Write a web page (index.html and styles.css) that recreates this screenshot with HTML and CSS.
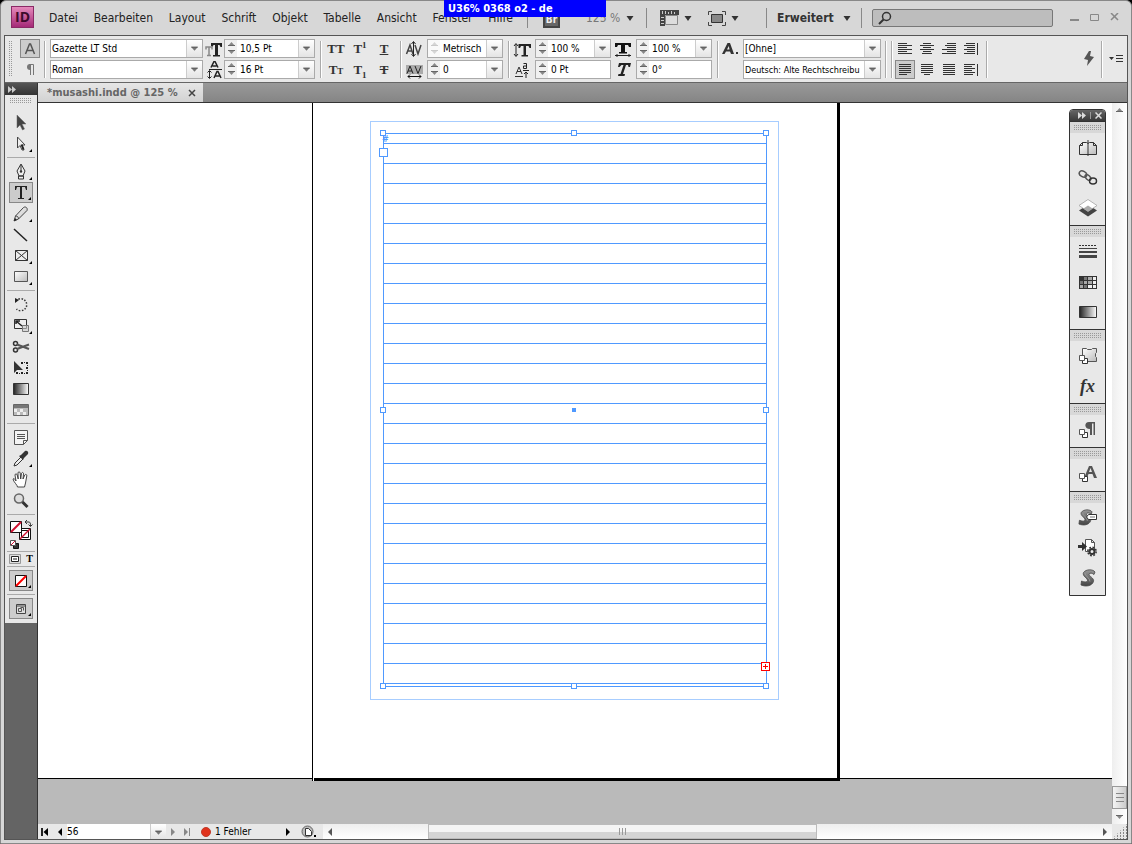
FILE: index.html
```html
<!DOCTYPE html>
<html lang="de">
<head>
<meta charset="utf-8">
<title>musashi.indd</title>
<link rel="stylesheet" href="styles.css">
</head>
<body>
<svg class="defs" aria-hidden="true">
  <defs>
    <linearGradient id="g-dark" x1="0" y1="0" x2="1" y2="0"><stop offset="0" stop-color="#222"/><stop offset="1" stop-color="#fff"/></linearGradient>
    <linearGradient id="g-light" x1="0" y1="0" x2="1" y2="1"><stop offset="0" stop-color="#fff"/><stop offset="1" stop-color="#bbb"/></linearGradient>
    <linearGradient id="g-grey" x1="0" y1="0" x2="0" y2="1"><stop offset="0" stop-color="#999"/><stop offset="1" stop-color="#444"/></linearGradient>
    <symbol id="drop" viewBox="0 0 16 17"><path d="M4.500 7h7l-3.500 4z" fill="#777"/><path d="M4.500 7h7" stroke="#555"/></symbol>
    <symbol id="up" viewBox="0 0 11 8"><path d="M2 6l3.500-4L9 6z" fill="#888"/><path d="M2 5.500h7" stroke="#666"/></symbol>
    <symbol id="down" viewBox="0 0 11 8"><path d="M2 2h7L5.500 6z" fill="#888"/><path d="M2 2.500h7" stroke="#666"/></symbol>
    <symbol id="caret" viewBox="0 0 8 8"><path d="M.5 2h7L4 7z" fill="#333"/></symbol>
    <symbol id="right" viewBox="0 0 6 8"><path d="M1 0l4 4-4 4z" fill="currentColor"/></symbol>
    <symbol id="left" viewBox="0 0 6 8"><path d="M5 0L1 4l4 4z" fill="currentColor"/></symbol>
    <symbol id="corner" viewBox="0 0 3 3"><path d="M3 0v3H0z"/></symbol>
    <symbol id="stack" viewBox="0 0 9 9"><path d="M3.500 3.500h5v5h-5z" fill="#fff" stroke="#333"/><path d="M.5.500h5v5h-5z" fill="#fff" stroke="#555"/></symbol>
    <symbol id="script" viewBox="0 0 16 18"><path d="M15 3C13 0 6 0 3.500 3.500 2 7 7.500 9 7.500 11.500 7.500 13.500 4 13 1.500 12L1 16c5 2 11 1 12.500-3.500C14.500 9 8.500 7 9 5.200c1-1.700 3-1.200 5 .3z" fill="url(#g-grey)" stroke="#444" stroke-width=".8"/><path d="M5 4c0 3 5 5 5 8.500" fill="none" stroke="#999"/></symbol>
  </defs>
</svg>

<div class="window">
  <header class="menubar">
    <div class="logo">ID</div>
    <nav class="menus">
      <a href="#">Datei</a><a href="#">Bearbeiten</a><a href="#">Layout</a><a href="#">Schrift</a><a href="#">Objekt</a><a href="#">Tabelle</a><a href="#">Ansicht</a><a href="#">Fenster</a><a href="#">Hilfe</a>
    </nav>
    <span class="rule"></span>
    <button class="bridge" type="button">Br</button>
    <button class="zoom-level" type="button">125 %<svg width="8" height="8"><use href="#caret"/></svg></button>
    <span class="rule"></span>
    <div class="view-tools">
      <button type="button" aria-label="Anzeigeoptionen"><svg width="19" height="16" viewBox="0 0 19 16"><path d="M0 0h19v5H5v11H0z" fill="#444"/><path d="M2.500 1v3M5.500 1v3M8.500 2v2M11.500 1v3M14.500 2v2M1 7.500h3M1 10.500h3M1 13.500h3" stroke="#ccc"/><path d="M5.500 5.500h12v9h-12z" fill="#ddd" stroke="#888"/></svg><svg width="8" height="8"><use href="#caret"/></svg></button>
      <button type="button" aria-label="Bildschirmmodus"><svg width="18" height="15" viewBox="0 0 18 15"><path d="M.5 4V.5H4M14 .5h3.500V4M17.500 11v3.500H14M4 14.500H.5V11" fill="none" stroke="#444"/><path d="M3.500 3.500h11v8h-11z" fill="#888" stroke="#333"/></svg><svg width="8" height="8"><use href="#caret"/></svg></button>
    </div>
    <span class="rule"></span>
    <button class="workspace" type="button">Erweitert<svg width="8" height="8"><use href="#caret"/></svg></button>
    <span class="rule"></span>
    <label class="search"><svg width="14" height="14" viewBox="0 0 14 14"><circle cx="8.500" cy="5.500" r="4" fill="none" stroke="#333" stroke-width="1.500"/><path d="M5.500 8.500L1 13" stroke="#333" stroke-width="2"/></svg><input type="text" aria-label="Suche"></label>
    <div class="win-buttons">
      <button type="button" aria-label="Minimieren"><svg width="10" height="10"><path d="M0 7h9" stroke="#888" stroke-width="2"/></svg></button>
      <button type="button" aria-label="Maximieren"><svg width="10" height="10"><path d="M.5 1.500h8v6h-8z" fill="none" stroke="#888"/></svg></button>
      <button type="button" aria-label="Schließen"><svg width="10" height="10"><path d="M1 0l7 7M8 0L1 7" stroke="#888" stroke-width="1.500"/></svg></button>
    </div>
    <div class="notice">U36% 0368 o2 - de</div>
  </header>

  <main class="workarea">
    <section class="controls">
      <span class="grip-v"></span>
      <div class="modes">
        <button class="on" type="button" aria-label="Zeichen"><svg width="12" height="12" viewBox="0 0 12 12"><path d="M1.500 11L5.500 1h1l4 10M3 7.500h6" fill="none" stroke="#555" stroke-width="1.500"/></svg></button>
        <button type="button" aria-label="Absatz"><svg width="10" height="11" viewBox="0 0 10 11"><path d="M4 .5h4.500V11M5.500 0v11" fill="none" stroke="#777"/><path d="M5 0a3 3 0 000 6z" fill="#777"/></svg></button>
      </div>
      <span class="sep"></span>
      <div class="col family">
        <label class="field"><select aria-label="Schrift"><option>Gazette LT Std</option></select><span class="drop"><svg><use href="#drop"/></svg></span></label>
        <label class="field"><select aria-label="Schnitt"><option>Roman</option></select><span class="drop"><svg><use href="#drop"/></svg></span></label>
      </div>
      <div class="glyphs narrow">
        <svg width="18" height="18" viewBox="0 0 18 18"><path d="M6 6V3h11v4h-1.500L14.500 5H13v10h2v1.500H8V15h2V5H8.500L7.500 7z" fill="#222"/><path d="M1 9.500V7h6v2.500M4 7v8M2 15.500h4" fill="none" stroke="#888" stroke-width="1.500"/></svg>
        <svg width="18" height="18" viewBox="0 0 18 18"><path d="M6 6.500l3-6h1l3 6M7.500 5h4M9 17l3-6.500h1l3 6.500M10.500 15h4" fill="none" stroke="#222" stroke-width="1.500"/><path d="M4 8.500h13M4.500 10v7M2.500 11.500l2-2 2 2M2.500 15.500l2 2 2-2" fill="none" stroke="#222"/></svg>
      </div>
      <div class="col size">
        <div class="field"><span class="spin"><button type="button" aria-label="Mehr"><svg><use href="#up"/></svg></button><button type="button" aria-label="Weniger"><svg><use href="#down"/></svg></button></span><input aria-label="Schriftgrad" value="10,5 Pt"><button class="drop" type="button" aria-label="Liste"><svg><use href="#drop"/></svg></button></div>
        <div class="field"><span class="spin"><button type="button" aria-label="Mehr"><svg><use href="#up"/></svg></button><button type="button" aria-label="Weniger"><svg><use href="#down"/></svg></button></span><input aria-label="Zeilenabstand" value="16 Pt"><button class="drop" type="button" aria-label="Liste"><svg><use href="#drop"/></svg></button></div>
      </div>
      <span class="sep"></span>
      <div class="caps">
        <button type="button">TT</button><button type="button">T<sup>1</sup></button><button type="button"><u>T</u></button>
        <button type="button">T<small>T</small></button><button type="button">T<sub>1</sub></button><button type="button"><s>T</s></button>
      </div>
      <span class="sep"></span>
      <div class="glyphs">
        <svg width="18" height="18" viewBox="0 0 18 18"><path d="M1.500 14L5 5l3 9M3 11h4M10 5l3 9 3-9" fill="none" stroke="#444" stroke-width="1.500"/><path d="M8.500 2v14M6.500 4l2-2.500 2 2.500M6.500 14l2 2.500 2-2.500" fill="none" stroke="#222"/></svg>
        <svg width="18" height="18" viewBox="0 0 18 18"><path d="M1 4h17v9H1z" fill="#aaa"/><path d="M2 12.500L5 5l3 7.500M3 10h4M10 5l3 7.500L16 5" fill="none" stroke="#222"/><path d="M3 15.500h13M5 13.500l-2 2 2 2M14 13.500l2 2-2 2" fill="none" stroke="#111"/></svg>
      </div>
      <div class="col kern">
        <div class="field"><span class="spin faint"><button type="button" aria-label="Mehr"><svg><use href="#up"/></svg></button><button type="button" aria-label="Weniger"><svg><use href="#down"/></svg></button></span><input aria-label="Kerning" value="Metrisch"><button class="drop" type="button" aria-label="Liste"><svg><use href="#drop"/></svg></button></div>
        <div class="field"><span class="spin"><button type="button" aria-label="Mehr"><svg><use href="#up"/></svg></button><button type="button" aria-label="Weniger"><svg><use href="#down"/></svg></button></span><input aria-label="Laufweite" value="0"><button class="drop" type="button" aria-label="Liste"><svg><use href="#drop"/></svg></button></div>
      </div>
      <span class="sep"></span>
      <div class="glyphs">
        <svg width="18" height="18" viewBox="0 0 18 18"><path d="M5.500 8V4H18v4h-1.500L15.500 6H13v9h2v1.500H8.500V15h2V6H8L7 8z" fill="#222"/><path d="M3 4v12M1 6l2-2.500L5 6M1 14l2 2.500L5 14" fill="none" stroke="#222"/></svg>
        <svg width="18" height="18" viewBox="0 0 18 18"><path d="M3 13l3-7 3 7M4 10.500h4M2 15.500h8" fill="none" stroke="#333"/><path d="M10.500 2.500h3v5h-3v-2.500h3M10 9.500h6M13 11v6M11 13l2-2 2 2" fill="none" stroke="#222"/></svg>
      </div>
      <div class="col scale">
        <div class="field"><span class="spin"><button type="button" aria-label="Mehr"><svg><use href="#up"/></svg></button><button type="button" aria-label="Weniger"><svg><use href="#down"/></svg></button></span><input aria-label="Vertikal skalieren" value="100 %"><button class="drop" type="button" aria-label="Liste"><svg><use href="#drop"/></svg></button></div>
        <div class="field"><span class="spin"><button type="button" aria-label="Mehr"><svg><use href="#up"/></svg></button><button type="button" aria-label="Weniger"><svg><use href="#down"/></svg></button></span><input aria-label="Grundlinienversatz" value="0 Pt"></div>
      </div>
      <div class="glyphs">
        <svg width="18" height="18" viewBox="0 0 18 18"><path d="M1 7V3h16v4h-2l-1-2h-3v7h2v1.500H5V12h2V5H4L3 7z" fill="#111"/><path d="M1 15.500h16M3 14v3M15 14v3" stroke="#222"/></svg>
        <svg width="18" height="18" viewBox="0 0 18 18"><path d="M4 6l1-4h12l-1 4h-1.500l-.5-2h-2l-3 9h2l-.5 2H4l.5-2h2l3-9H7.500L5.500 6z" fill="#222"/></svg>
      </div>
      <div class="col scale">
        <div class="field"><span class="spin"><button type="button" aria-label="Mehr"><svg><use href="#up"/></svg></button><button type="button" aria-label="Weniger"><svg><use href="#down"/></svg></button></span><input aria-label="Horizontal skalieren" value="100 %"><button class="drop" type="button" aria-label="Liste"><svg><use href="#drop"/></svg></button></div>
        <div class="field"><span class="spin"><button type="button" aria-label="Mehr"><svg><use href="#up"/></svg></button><button type="button" aria-label="Weniger"><svg><use href="#down"/></svg></button></span><input aria-label="Neigen" value="0°"></div>
      </div>
      <span class="sep after-scale"></span>
      <div class="glyphs">
        <svg width="20" height="18" viewBox="0 0 20 18"><path d="M1 14L6.500 3H9l4 11h-3l-1-2.500H5L3.500 14zM6 9.500h2.500L7.800 6z" fill="#333"/><path d="M15 12h2v2h-2z" fill="#333"/></svg>
      </div>
      <div class="col style">
        <label class="field"><select aria-label="Zeichenformat"><option>[Ohne]</option></select><span class="drop"><svg><use href="#drop"/></svg></span></label>
        <label class="field"><select class="language" aria-label="Sprache"><option>Deutsch: Alte Rechtschreibu</option></select><span class="drop"><svg><use href="#drop"/></svg></span></label>
      </div>
      <span class="sep"></span>
      <span class="sep"></span>
      <div class="aligns">
        <button type="button" aria-label="Linksbündig"><svg width="16" height="12"><path d="M1 .5h9M1 2.500h14M1 4.500h9M1 6.500h14M1 8.500h9M1 10.500h14"/></svg></button>
        <button type="button" aria-label="Zentriert"><svg width="16" height="12"><path d="M4 .5h8M1 2.500h14M4 4.500h8M1 6.500h14M4 8.500h8M3 10.500h10"/></svg></button>
        <button type="button" aria-label="Rechtsbündig"><svg width="16" height="12"><path d="M6 .5h9M4 2.500h11M6 4.500h9M1 6.500h14M6 8.500h9M1 10.500h14"/></svg></button>
        <button type="button" aria-label="Am Rücken"><svg width="16" height="12"><path d="M3 .5h9M1 2.500h11M4 4.500h8M1 6.500h11M4 8.500h8M1 10.500h11M14.500 0v12"/></svg></button>
        <button class="on" type="button" aria-label="Blocksatz links"><svg width="16" height="12"><path d="M2 .5h12M2 2.500h12M2 4.500h12M2 6.500h12M2 8.500h12M2 10.500h8"/></svg></button>
        <button type="button" aria-label="Blocksatz Mitte"><svg width="16" height="12"><path d="M2 .5h12M2 2.500h12M2 4.500h12M2 6.500h12M2 8.500h12M5 10.500h6"/></svg></button>
        <button type="button" aria-label="Blocksatz"><svg width="16" height="12"><path d="M2 .5h12M2 2.500h12M2 4.500h12M2 6.500h12M2 8.500h12M2 10.500h12"/></svg></button>
        <button type="button" aria-label="Weg vom Rücken"><svg width="16" height="12"><path d="M1 .5h11M1 2.500h8M1 4.500h11M1 6.500h8M1 8.500h11M1 10.500h9M14.500 0v12"/></svg></button>
      </div>
      <span class="sep"></span>
      <div class="extras">
        <button type="button" aria-label="Schnell anwenden"><svg width="12" height="16" viewBox="0 0 12 16"><path d="M6 0L1 8l4 1-1 6 7-9-4-1 1-5z" fill="#555"/></svg></button>
        <span class="sep"></span>
        <button type="button" aria-label="Menü"><svg width="14" height="8" viewBox="0 0 14 8"><path d="M0 2h5L2.500 5zM7 0h7v1H7zM7 3h7v1H7zM7 6h7v1H7z" fill="#333"/></svg></button>
      </div>
    </section>

    <div class="lower">
      <aside class="toolbox">
        <button class="dock-head" type="button" aria-label="Erweitern"><svg width="8" height="7" viewBox="0 0 8 7"><path d="M0 0l4 3.500L0 7zM4 0l4 3.500L4 7z" fill="#ccc"/></svg></button>
        <div class="tools">
          <span class="grip-h"></span>
          <div class="set">
            <button type="button" aria-label="Auswahl"><svg width="20" height="20" viewBox="0 0 20 20"><path d="M6 2v13l3-3 2.500 5 2-1-2.500-5h4z" fill="#444" stroke="#666" stroke-width=".5"/></svg></button>
            <button type="button" aria-label="Direktauswahl"><svg width="20" height="20" viewBox="0 0 20 20"><path d="M6.500 3v11l2.500-2.500L11 16h2l-2-5h3z" fill="#eee" stroke="#444"/><path d="M10.500 10.500l2 5" stroke="#222" stroke-width="2"/></svg><svg class="more"><use href="#corner"/></svg></button>
          </div>
          <div class="set">
            <button type="button" aria-label="Zeichenstift"><svg width="20" height="20" viewBox="0 0 20 20"><path d="M10 2l4 7-2 5H8L6 9zM10 3v6M7.500 14h5v3h-5z" fill="#eee" stroke="#333"/><circle cx="10" cy="9.500" r="1.200" fill="#333"/></svg><svg class="more"><use href="#corner"/></svg></button>
            <button class="on" type="button" aria-label="Text"><svg width="20" height="20" viewBox="0 0 20 20"><path d="M4 7V3h12v4h-1l-1-3h-3v11h2v1H7v-1h2V4H6L5 7z" fill="#222"/></svg><svg class="more"><use href="#corner"/></svg></button>
            <button type="button" aria-label="Buntstift"><svg width="20" height="20" viewBox="0 0 20 20"><path d="M3 17l1.500-5 8-8.500c2-1.500 4.500.5 3.500 3l-8.500 8.500zM4.500 12c2 0 3 1 3 3" fill="url(#g-light)" stroke="#444"/><path d="M3 17l1-3 2 2z" fill="#222"/></svg><svg class="more"><use href="#corner"/></svg></button>
            <button type="button" aria-label="Linie"><svg width="20" height="20" viewBox="0 0 20 20"><path d="M3 4l13 12" stroke="#222" stroke-width="1.500"/></svg></button>
            <button type="button" aria-label="Rechteckrahmen"><svg width="20" height="20" viewBox="0 0 20 20"><path d="M4.500 4.500h12v10h-12zM4.500 4.500l12 10M16.500 4.500l-12 10" fill="#eee" stroke="#333"/></svg><svg class="more"><use href="#corner"/></svg></button>
            <button type="button" aria-label="Rechteck"><svg width="20" height="20" viewBox="0 0 20 20"><path d="M3.500 4.500h13v10h-13z" fill="url(#g-light)" stroke="#555"/></svg><svg class="more"><use href="#corner"/></svg></button>
          </div>
          <div class="set">
            <button type="button" aria-label="Drehen"><svg width="20" height="20" viewBox="0 0 20 20"><path d="M5 6a6 6 0 11.500 8" fill="none" stroke="#333" stroke-width="1.500" stroke-dasharray="1.500 1.500"/><path d="M4 8V3l4 2z" fill="#222"/></svg></button>
            <button type="button" aria-label="Skalieren"><svg width="20" height="20" viewBox="0 0 20 20"><path d="M3.500 3.500h12v9h-12z" fill="#eee" stroke="#333"/><path d="M11.500 9.500h6v6h-6z" fill="#ccc" fill-opacity=".6" stroke="#777"/><path d="M5 8V5h4M5 5l6 5" fill="none" stroke="#222" stroke-width="1.500"/></svg><svg class="more"><use href="#corner"/></svg></button>
            <button type="button" aria-label="Schere"><svg width="20" height="20" viewBox="0 0 20 20"><circle cx="4.500" cy="6.500" r="2" fill="none" stroke="#333" stroke-width="1.500"/><circle cx="4.500" cy="13" r="2" fill="none" stroke="#333" stroke-width="1.500"/><path d="M6 7.500l12 4.500M6 12l12-4.500" stroke="#555" stroke-width="2"/></svg></button>
            <button type="button" aria-label="Frei transformieren"><svg width="20" height="20" viewBox="0 0 20 20"><path d="M10 4h2v2h-2zM13 4h1v1h-1zM15 4h2v2h-2zM16 7h1v1h-1zM15 9h2v2h-2zM16 12h1v1h-1zM15 14h2v2h-2zM13 15h1v1h-1zM10 14h2v2h-2zM8 15h1v1H8zM5 14h2v2H5z" fill="#222"/><path d="M3 3v12l3-3h6z" fill="#333"/></svg></button>
            <button type="button" aria-label="Verlauf"><svg width="20" height="20" viewBox="0 0 20 20"><path d="M2.500 4.500h15v11h-15z" fill="url(#g-dark)" stroke="#333"/></svg></button>
            <button type="button" aria-label="Weiche Verlaufskante"><svg width="20" height="20" viewBox="0 0 20 20"><path d="M2.500 4.500h15v11h-15z" fill="#bbb" stroke="#666"/><path d="M3 9h3v3H3zM9 9h3v3H9zM6 12h3v3H6zM12 12h3v3h-3z" fill="#eee"/><path d="M3 5h14v3H3z" fill="#777"/></svg></button>
          </div>
          <div class="set">
            <button type="button" aria-label="Notiz"><svg width="20" height="20" viewBox="0 0 20 20"><path d="M3.500 2.500h13v10l-4 4h-9z" fill="#f4f4f4" stroke="#555"/><path d="M6 6.500h8M6 8.500h8M6 10.500h8M12.500 16.500v-4h4" fill="none" stroke="#555"/></svg></button>
            <button type="button" aria-label="Pipette"><svg width="20" height="20" viewBox="0 0 20 20"><path d="M3 17l1-3 6-6 2 2-6 6z" fill="#eee" stroke="#333"/><path d="M8 7l2-1 4-4c2-1 4 1 3 3l-4 4-1 2z" fill="#333"/></svg><svg class="more"><use href="#corner"/></svg></button>
            <button type="button" aria-label="Hand"><svg width="20" height="20" viewBox="0 0 20 20"><path d="M6.500 17c0-2-4-5-4.500-8 1-1 2 0 3 2L4 5c0-1.500 2-1.500 2.200 0l1 4L7 3c0-1.500 2-1.500 2.200 0l.5 6 .8-5.500c.3-1.500 2.200-1.200 2 .2L12 9l1.800-4c.8-1.200 2.300-.5 2 .8L14.500 13l-1 4z" fill="#fff" stroke="#333" stroke-width=".9"/></svg></button>
            <button type="button" aria-label="Zoom"><svg width="20" height="20" viewBox="0 0 20 20"><circle cx="8" cy="7.500" r="4.500" fill="#ddd" stroke="#666" stroke-width="1.500"/><path d="M11.500 11l5 5" stroke="#333" stroke-width="3"/></svg></button>
          </div>
          <div class="colours">
            <svg width="26" height="32" viewBox="0 0 26 32"><path d="M11.500 10.500h11v11h-11z" fill="#fff" stroke="#111"/><path d="M13.500 12.500h7v7h-7z" fill="#fff" stroke="#111"/><path d="M12 21L22 11" stroke="#d01030" stroke-width="1.500"/><path d="M2.500 3.500h11v11h-11z" fill="#fff" stroke="#111"/><path d="M3 14L13 4" stroke="#d01030" stroke-width="2"/><path d="M17 4h4c1 0 1.500 1 1.500 4M19 2l-2 2 2 2M20.500 6.500l2 2 2-2" fill="none" stroke="#333"/><path d="M5.500 25.500h5v5h-5z" fill="#333" stroke="#111"/><path d="M2.500 22.500h5v5h-5z" fill="#fff" stroke="#555"/><path d="M3 27l4-4" stroke="#d01030"/></svg>
          </div>
          <div class="apply">
            <svg width="12" height="10"><path d="M.5.5h11v9H.5z" fill="#ddd" stroke="#999"/><path d="M2.500 2.500h7v5h-7z" fill="#fff" stroke="#222"/><path d="M4 4h4v2H4z" fill="#888"/></svg>
            <b>T</b>
          </div>
          <div class="wide"><button class="on" type="button" aria-label="Keine"><svg width="14" height="14" viewBox="0 0 14 14"><path d="M1.500 1.500h11v11h-11z" fill="#fff" stroke="#111"/><path d="M2 12L12 2" stroke="#f00" stroke-width="2"/></svg><svg class="more"><use href="#corner"/></svg></button></div>
          <div class="wide"><button class="on" type="button" aria-label="Ansichtsmodus"><svg width="14" height="14" viewBox="0 0 14 14"><path d="M2.500 2.500h9v9h-9z" fill="#ddd" stroke="#444"/><path d="M2 4h10" stroke="#444"/><path d="M4.500 6.500h3v3h-3zM6.500 5.500h3v3" fill="none" stroke="#555"/></svg><svg class="more"><use href="#corner"/></svg></button></div>
        </div>
      </aside>

      <section class="document">
        <div class="tabs"><div class="tab"><span>*musashi.indd @ 125 %</span><button type="button" aria-label="Tab schließen"><svg width="8" height="8"><path d="M1 1l6 6M7 1L1 7" stroke="#444" stroke-width="1.500"/></svg></button></div></div>
        <div class="view">
          <div class="canvas">
            <div class="pasteboard">
              <div class="page">
                <div class="margin"></div>
                <div class="frame">
                  <span class="hash">#</span>
                  <i class="knob tl"></i><i class="knob tc"></i><i class="knob tr"></i>
                  <i class="knob ml"></i><i class="knob mid"></i><i class="knob mr"></i>
                  <i class="knob bl"></i><i class="knob bc"></i><i class="knob br"></i>
                  <i class="port in"></i><i class="port out"></i>
                </div>
              </div>
            </div>
          </div>
          <div class="vscroll">
            <button type="button" aria-label="Nach oben"><svg width="11" height="8"><use href="#up"/></svg></button>
            <span class="vthumb"></span>
            <button type="button" aria-label="Nach unten"><svg width="11" height="8"><use href="#down"/></svg></button>
          </div>
        </div>
        <footer class="status">
          <button type="button" aria-label="Erste Seite"><svg width="8" height="8"><path d="M1 0v8" stroke="#222" stroke-width="2"/><path d="M7 0v8L2.500 4z"/></svg></button>
          <button type="button" aria-label="Vorherige Seite"><svg width="6" height="8"><use href="#left"/></svg></button>
          <input class="page-no" aria-label="Seite" value="56">
          <button class="drop" type="button" aria-label="Seitenliste"><svg><use href="#drop"/></svg></button>
          <button class="dim" type="button" aria-label="Nächste Seite"><svg width="6" height="8"><use href="#right"/></svg></button>
          <button class="dim" type="button" aria-label="Letzte Seite"><svg width="8" height="8"><path d="M1 0v8l4-4zM6 0h1v8H6z" fill="currentColor"/></svg></button>
          <span class="errors"><i></i>1 Fehler</span>
          <button type="button" aria-label="Preflight-Menü"><svg width="6" height="8"><use href="#right"/></svg></button>
          <button class="preflight" type="button" aria-label="Status"><svg width="16" height="14" viewBox="0 0 16 14"><circle cx="6.500" cy="6.500" r="5.500" fill="#bbb" stroke="#666"/><path d="M4.500 3.500h3l3 3v4h-6z" fill="#fff" stroke="#333"/><path d="M13 10h2v2h-2z"/></svg></button>
          <div class="hscroll">
            <button type="button" aria-label="Nach links"><svg width="6" height="8"><use href="#left"/></svg></button>
            <span class="hthumb"></span>
            <button type="button" aria-label="Nach rechts"><svg width="6" height="8"><use href="#right"/></svg></button>
          </div>
          <span class="resize"></span>
        </footer>

        <aside class="panels">
          <div class="panels-head"><svg width="8" height="7" viewBox="0 0 8 7"><path d="M0 0l4 3.500L0 7zM4 0l4 3.500L4 7z" fill="#ddd"/></svg><span></span><svg width="7" height="7"><path d="M.5.5l6 6M6.500.5l-6 6" stroke="#ddd" stroke-width="1.500"/></svg></div>
          <div class="group">
            <button type="button" aria-label="Seiten"><svg width="20" height="20" viewBox="0 0 20 20"><path d="M1.500 16.500v-9l3-3h4l1.500 1 1.500-1h4l3 3v9zM1.500 7.500h3v-3M18.500 7.500h-3v-3" fill="url(#g-light)" stroke="#333"/><path d="M10 2v16" stroke="#333"/></svg></button>
            <button type="button" aria-label="Verknüpfungen"><svg width="20" height="20" viewBox="0 0 20 20"><g fill="none" stroke="#555" stroke-width="1.500"><ellipse cx="5" cy="6" rx="4" ry="2.800" transform="rotate(30 5 6)"/><ellipse cx="10" cy="9.500" rx="3.500" ry="2" transform="rotate(45 10 9.500)"/><ellipse cx="15" cy="13" rx="3.500" ry="3" stroke="#333"/></g></svg></button>
            <button type="button" aria-label="Ebenen"><svg width="20" height="20" viewBox="0 0 20 20"><path d="M1 12.500l9-6 9 6-9 6z" fill="#444"/><path d="M1 7.500l9-6 9 6-9 6z" fill="#fff" stroke="#999" stroke-width=".7"/><path d="M5.500 10.500l4.500-3 4.500 3-4.500 3z" fill="#aaa"/></svg></button>
          </div>
          <div class="group">
            <button type="button" aria-label="Kontur"><svg width="20" height="20" viewBox="0 0 20 20"><path d="M1 3.500h18" stroke="#333" stroke-dasharray="2 1"/><path d="M1 6.500h18" stroke="#444"/><path d="M1 10h18" stroke="#444" stroke-width="2"/><path d="M1 14.500h18" stroke="#444" stroke-width="3"/></svg></button>
            <button type="button" aria-label="Farbfelder"><svg width="20" height="20" viewBox="0 0 20 20"><path d="M1 4h18v13H1z" fill="#333"/><path d="M6 5h3v3H6zM2 9h3v3H2zM6 13h3v3H6z" fill="#777"/><path d="M10 5h4v3h-4zM6 9h3v3H6zM2 13h3v3H2zM10 9h4v3h-4z" fill="#aaa"/><path d="M15 5h3v3h-3zM15 9h3v3h-3zM10 13h4v3h-4zM15 13h3v3h-3z" fill="#eee"/></svg></button>
            <button type="button" aria-label="Verlauf"><svg width="20" height="20" viewBox="0 0 20 20"><path d="M1.500 4.500h17v11h-17z" fill="url(#g-dark)" stroke="#333"/></svg></button>
          </div>
          <div class="group">
            <button type="button" aria-label="Objektformate"><svg width="20" height="20" viewBox="0 0 20 20"><path d="M4.500 2.500h4l1 1h4l1-1h4v4l-1 1v3l1 1v4h-14z" fill="url(#g-light)" stroke="#555"/><use href="#stack" x="1" y="9" width="9" height="9"/></svg></button>
            <button type="button" aria-label="Effekte"><span class="fx">fx</span></button>
          </div>
          <div class="group">
            <button type="button" aria-label="Absatzformate"><svg width="20" height="20" viewBox="0 0 20 20"><path d="M11 2h6v13h-1.500V3.500H14V15h-2V9c-6 0-6-7-1-7z" fill="#555"/><use href="#stack" x="1" y="9" width="9" height="9"/></svg></button>
          </div>
          <div class="group">
            <button type="button" aria-label="Zeichenformate"><svg width="20" height="20" viewBox="0 0 20 20"><path d="M6 14l5-12h3l5 12h-3l-1.500-4h-4L9 14zM11 8h3l-1.500-4z" fill="#555"/><use href="#stack" x="1" y="9" width="9" height="9"/></svg></button>
          </div>
          <div class="group">
            <button type="button" aria-label="Skriptetikett"><svg width="20" height="20" viewBox="0 0 20 20"><use href="#script" x="0" y="1" width="15" height="17"/><path d="M8.500 9l2-2.500h8v5h-8z" fill="#fff" stroke="#333"/><path d="M12 9h5" stroke="#777"/></svg></button>
            <button type="button" aria-label="Hintergrundaufgaben"><svg width="20" height="20" viewBox="0 0 20 20"><path d="M7.500 1.500h6l3 3v9h-9zM13.500 1.500v3h3" fill="#fff" stroke="#555"/><path d="M0 7h4V4l5 4.500L4 13v-3H0z" fill="#333"/><circle cx="14" cy="13.500" r="2.500" fill="#eee" stroke="#333" stroke-width="2"/><circle cx="14" cy="13.500" r="4.200" fill="none" stroke="#333" stroke-width="1.500" stroke-dasharray="1.800 1.500"/></svg></button>
            <button type="button" aria-label="Skripte"><svg width="20" height="20" viewBox="0 0 20 20"><use href="#script" x="2" y="1" width="16" height="18"/></svg></button>
          </div>
        </aside>
      </section>
    </div>
  </main>
</div>
</body>
</html>
```
FILE: styles.css
```css
*, *::before { box-sizing: border-box; }
body { margin: 0; background: #000; font: 10px/14px "DejaVu Sans Condensed", "DejaVu Sans", sans-serif; color: #000; }
button, input, select { font: inherit; color: inherit; border: 0; padding: 0; margin: 0; background: none; border-radius: 0; appearance: none; }
button { display: flex; align-items: center; justify-content: center; flex: none; }
svg { display: block; flex: none; }
a { color: inherit; text-decoration: none; }
.defs { position: absolute; width: 0; height: 0; }

.window { min-height: 100vh; display: flex; flex-direction: column; padding: 0 3px 3px; background: #d7d7d7; border: 1px solid #888; border-radius: 6px 6px 0 0; }

/* menu bar */
.menubar { position: relative; height: 34px; flex: none; display: flex; align-items: center; padding-left: 7px; font-size: 12px; line-height: 16px; color: #222; }
.logo { width: 23px; height: 22px; margin: 0 15px 2px 0; flex: none; background: linear-gradient(#e58abb, #a52a78); border: 1px solid #8a2a66; color: #3d0b2b; font: bold 14px/20px "Open Sans", sans-serif; text-align: center; }
.menus { width: 464px; flex: none; display: flex; justify-content: space-between; margin-right: 14px; }
.rule { width: 1px; height: 20px; flex: none; background: #888; }
.bridge { width: 17px; height: 15px; margin: 4px 26px 0 15px; border: 2px solid #444; background: #666; color: #eee; font-weight: bold; font-size: 10px; }
.zoom-level { width: 48px; justify-content: space-between; margin-right: 12px; color: #777; font-size: 12px; }
.view-tools { width: 93px; display: flex; gap: 16px; padding-left: 13px; margin-right: 26px; }
.view-tools button { gap: 5px; }
.workspace { width: 74px; justify-content: space-between; margin: 0 10px; font-weight: bold; color: #333; }
.search { height: 18px; margin: 0 16px 0 10px; flex: 0 1 181px; display: flex; align-items: center; padding-left: 5px; background: #bdbdbd; border: 1px solid #777; border-radius: 2px; }
.search input { flex: 1; min-width: 0; }
.win-buttons { display: flex; gap: 10px; margin-left: auto; padding-right: 8px; }
.notice { position: absolute; left: 440px; top: -1px; width: 162px; height: 17px; padding-left: 4px; background: #00f; color: #fff; font-weight: bold; font-size: 11px; line-height: 17px; white-space: nowrap; }

/* control strip */
.workarea { flex: 1; display: flex; flex-direction: column; border: 1px solid #555; background: #646464; }
.controls { flex: none; display: flex; align-items: center; height: 47px; padding-left: 4px; background: #e8e8e8; border-bottom: 1px solid #666; }
.controls > * { flex: none; }
.grip-v { width: 4px; height: 36px; margin-right: 7px; background: conic-gradient(transparent 75%, #999 0) 0 0 / 2px 2px; }
.sep { width: 2px; height: 37px; background: linear-gradient(90deg, #aaa 50%, #fff 50%); }
.modes { display: grid; gap: 2px; margin-right: 4px; }
.modes button { width: 20px; height: 19px; }
.on { background: #ccc; border: 1px solid #888; }
.col { display: grid; grid-template-columns: minmax(0, 1fr); gap: 2px; }
.field { display: flex; height: 19px; background: #fff; border: 1px solid #aaa; }
.field input, .field select { flex: 1; min-width: 0; padding-left: 3px; white-space: nowrap; }
.field select { padding-left: 1px; }
.family { width: 153px; margin-left: 4px; }
.size { width: 91px; margin-right: 5px; }
.kern { width: 76px; margin: 0 5px 0 1px; }
.scale { width: 76px; margin-left: 1px; }
.after-scale { margin-left: 5px; }
.style { width: 138px; margin-right: 4px; }
.field .language { font-size: 9px; }
.drop { display: block; width: 16px; height: 17px; flex: none; background: linear-gradient(#fff, #e4e4e4); border-left: 1px solid #ccc; }
.drop svg { width: 15px; height: 17px; }
.spin { width: 12px; flex: none; background: #f0f0f0; }
.spin button { width: 12px; height: 8px; }
.spin svg { width: 11px; height: 8px; }
.faint { opacity: .35; }
.glyphs { width: 24px; height: 40px; display: grid; grid-template-rows: 19px 19px; gap: 2px; justify-items: center; align-items: center; }
.narrow { width: 21px; }
.caps { width: 76px; display: grid; grid-template-columns: repeat(3, 24px); grid-auto-rows: 19px; gap: 2px 0; margin-left: 2px; font: bold 13px/18px "Liberation Serif", serif; color: #333; }
.caps button { display: block; text-align: center; }
.caps sup, .caps sub, .caps small { font-size: 9px; line-height: 0; }
.aligns { display: grid; grid-template-columns: repeat(4, 20px); grid-auto-rows: 19px; gap: 2px; margin: 0 5px 0 2px; }
.sep + .sep { margin-left: 4px; }
.aligns svg { stroke: #333; fill: none; }
.extras { margin-left: auto; display: flex; align-items: center; gap: 6px; padding-right: 4px; }

/* toolbox */
.lower { flex: 1; display: flex; }
.toolbox { width: 33px; flex: none; background: #646464; border-right: 1px solid #333; }
.dock-head { width: 32px; height: 12px; justify-content: flex-start; padding-left: 3px; background: linear-gradient(#555, #333); }
.tools { display: flex; flex-direction: column; padding: 3px 2px 4px; background: #e8e8e8; }
.grip-h { height: 5px; margin: 0 3px 9px; background: conic-gradient(transparent 75%, #999 0) 0 0 / 2px 2px; }
.set { padding-bottom: 3px; margin-bottom: 3px; border-bottom: 1px solid #aaa; }
.set button, .wide button { position: relative; width: 24px; height: 21px; margin: 0 auto; }
.more { position: absolute; right: 1px; bottom: 2px; width: 3px; height: 3px; }
.colours { height: 34px; border-bottom: 1px solid #aaa; padding-left: 1px; }
.apply { height: 15px; display: flex; align-items: center; justify-content: center; gap: 5px; border-bottom: 1px solid #aaa; font-family: "Liberation Serif", serif; }
.wide { padding-top: 3px; }
.wide + .wide { border-top: 1px solid #aaa; margin-top: 3px; }

/* document window */
.document { position: relative; flex: 1; min-width: 0; display: flex; flex-direction: column; }
.tabs { height: 20px; flex: none; display: flex; background: linear-gradient(#999, #858585); border-bottom: 1px solid #333; }
.tab { width: 165px; display: flex; align-items: center; justify-content: space-between; padding: 0 7px 0 9px; background: linear-gradient(#e6e6e6, #d2d2d2); font-size: 11px; font-weight: bold; color: #666; white-space: nowrap; }
.view { flex: 1; display: flex; }
.canvas { position: relative; flex: 1; min-width: 0; overflow: hidden; background: #bababa; }
.pasteboard { height: 676px; background: #fff; border-bottom: 1px solid #000; }
.page { position: absolute; left: 274px; top: 0; width: 528px; height: 678px; background: linear-gradient(#000, #000) 1px 100% / 100% 3px no-repeat, #fff; border-left: 1px solid #000; border-right: 3px solid #000; }
.margin { position: absolute; left: 57px; top: 18px; width: 409px; height: 579px; border: 1px solid #a7cdff; }
.frame { position: absolute; left: 70px; top: 30px; width: 384px; height: 554px; border: 1px solid #4f99ff; background: repeating-linear-gradient(transparent 0 19px, #4f99ff 19px 20px) 0 -10px / 100% 570px no-repeat; }
.knob { position: absolute; width: 6px; height: 6px; border: 1px solid #4f99ff; background: #fff; }
.tl, .ml, .bl { left: -4px; }
.tc, .mid, .bc { left: 187px; }
.tr, .mr, .br { right: -3px; }
.tl, .tc, .tr { top: -4px; }
.ml, .mid, .mr { top: 273px; }
.bl, .bc, .br { bottom: -3px; }
.mid { width: 4px; height: 4px; margin: 1px; background: #4f99ff; }
.port { position: absolute; width: 9px; height: 9px; border: 1px solid #4f99ff; background: #fff; }
.in { left: -5px; top: 14px; }
.out { right: -4px; bottom: 15px; border-color: #f00; background: linear-gradient(#f00, #f00) center / 5px 1px no-repeat, linear-gradient(#f00, #f00) center / 1px 5px no-repeat, #fff; }
.hash { position: absolute; left: -2px; top: -1px; font-size: 9px; font-weight: bold; line-height: 12px; color: #4f99ff; }
.vscroll { width: 15px; flex: none; display: flex; flex-direction: column; background: linear-gradient(90deg, #eee, #fff); }
.vscroll button { width: 15px; height: 14px; }
.vthumb { height: 23px; margin: auto 0 1px; border: 1px solid #999; background: repeating-linear-gradient(#888 0 1px, transparent 1px 4px) center / 8px 9px no-repeat, linear-gradient(90deg, #f4f4f4, #ccc); }

/* status row */
.status { height: 15px; flex: none; display: flex; align-items: stretch; background: #e8e8e8; }
.status > button { width: 14px; }
.status > button:nth-child(2) { width: 15px; }
.page-no { width: 83px; background: #fff; }
.status > .drop { width: 16px; height: 15px; }
.dim { color: #888; }
.errors { width: 87px; display: flex; align-items: center; gap: 4px; padding-left: 7px; }
.errors i { width: 10px; height: 10px; border-radius: 50%; background: #e0321c; border: 1px solid #c03a28; }
.status > .preflight { width: 28px; }
.hscroll { flex: 1; display: flex; background: linear-gradient(#eee, #fff); color: #555; }
.hscroll button { width: 14px; }
.hthumb { width: 389px; margin: 0 auto 0 91px; border: 1px solid #bbb; background: repeating-linear-gradient(90deg, #999 0 1px, transparent 1px 3px) center / 8px 7px no-repeat, linear-gradient(#f4f4f4 50%, #d4d4d4 50%); }
.resize { width: 15px; background: conic-gradient(transparent 75%, #888 0) 2px 2px / 3px 3px; clip-path: polygon(100% 0, 100% 100%, 0 100%); }

/* floating panel dock */
.panels { position: absolute; right: 21px; top: 26px; width: 37px; border: 1px solid #333; border-radius: 4px 4px 0 0; background: #e8e8e8; overflow: hidden; }
.panels-head { height: 11px; display: flex; align-items: center; justify-content: flex-end; gap: 4px; padding-right: 3px; background: linear-gradient(#666, #3a3a3a); }
.panels-head span { width: 1px; height: 7px; background: #999; }
.group { padding-bottom: 2px; border-top: 1px solid #333; }
.group::before { content: ""; display: block; height: 11px; padding: 3px 4px; background: conic-gradient(transparent 75%, #999 0) content-box 0 0 / 2px 2px, #d8d8d8; }
.group button { width: 35px; height: 30px; }
.fx { font: italic bold 18px/20px "Liberation Serif", serif; color: #333; }
```
